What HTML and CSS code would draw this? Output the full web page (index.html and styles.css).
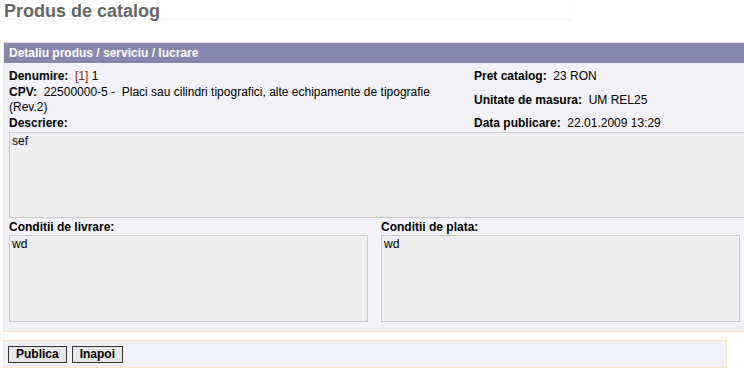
FILE: index.html
```html
<!DOCTYPE html>
<html lang="ro">
<head>
    <meta charset="UTF-8">
    <meta name="viewport" content="width=device-width, initial-scale=1.0">
    <title>Produs de catalog</title>
    <link rel="stylesheet" href="styles.css">
</head>
<body>
    <div class="page-title">
        <h1>Produs de catalog</h1>
    </div>

    <div class="panel">
        <div class="panel-head">Detaliu produs / serviciu / lucrare</div>
        <div class="panel-body">
            <div class="details">
                <div class="cell"><b>Denumire:</b>&nbsp; <span class="ref">[1]</span> 1</div>
                <div class="cell"><b>Pret catalog:</b>&nbsp; 23 RON</div>
                <div class="cell cpv"><b>CPV:</b>&nbsp; 22500000-5 -&nbsp; Placi sau cilindri tipografici, alte echipamente de tipografie<br>(Rev.2)</div>
                <div class="cell"><b>Unitate de masura:</b>&nbsp; UM REL25</div>
                <div class="cell"><b>Descriere:</b></div>
                <div class="cell"><b>Data publicare:</b>&nbsp; 22.01.2009 13:29</div>
            </div>
            <textarea class="box box-desc" readonly>sef</textarea>
            <div class="conditions">
                <div class="cond">
                    <label>Conditii de livrare:</label>
                    <textarea class="box box-cond" readonly>wd</textarea>
                </div>
                <div class="cond">
                    <label>Conditii de plata:</label>
                    <textarea class="box box-cond" readonly>wd</textarea>
                </div>
            </div>
        </div>
    </div>

    <div class="actions">
        <button class="btn">Publica</button>
        <button class="btn">Inapoi</button>
    </div>
</body>
</html>
```

FILE: styles.css
```css
body { margin: 0; padding: 0 0 0 3px; font-family: "Liberation Sans", Arial, sans-serif; font-size: 12px; color: #000; background: #fff; overflow: hidden; }

.page-title { width: 568px; height: 19px; border-bottom: 1px solid #f2f2f2; border-right: 1px solid #f6f6f6; }
.page-title h1 { margin: 0; padding: 3px 0 0 1px; font-size: 18px; line-height: 17px; color: #666; font-weight: bold; }

.panel { width: 770px; margin-top: 22px; border-top: 1px solid #eadbd3; border-left: 1px solid #fbe6c6; border-bottom: 1px solid #fbe6c6; background: #f1f1f6; }
.panel-head { height: 20px; line-height: 20px; padding-left: 5px; background: #8787ae; color: #fff; font-weight: bold; }
.panel-body { padding: 6px 0 9px 5px; }

.details { display: grid; grid-template-columns: 465px 1fr; row-gap: 1px; align-items: center; line-height: 15px; }
.cpv { padding-right: 30px; }
.ref { color: #8b1a1a; }

.box { display: block; box-sizing: border-box; margin: 0; padding: 1px 2px; resize: none; font-family: "Liberation Sans", Arial, sans-serif; font-size: 12px; line-height: 14px; color: #000; background: #eeeeee; border: 1px solid #c6c6c6; overflow: hidden; }
.box-desc { width: 760px; height: 86px; margin-top: 1px; }

.conditions { display: grid; grid-template-columns: 359px 359px; column-gap: 13px; margin-top: 2px; }
.cond label { display: block; font-weight: bold; line-height: 14px; margin-bottom: 1px; }
.box-cond { width: 359px; height: 87px; }

.actions { width: 724px; height: 28px; margin-top: 8px; display: flex; align-items: center; gap: 5px; padding-left: 4px; box-sizing: border-box; background: #f1f1f8; border: 1px solid #fce5c0; }
.btn { height: 17px; padding: 0 7px; font-family: "Liberation Sans", Arial, sans-serif; font-size: 12px; font-weight: bold; color: #000; background: #e6e6e6; border: 1px solid #333; border-radius: 0; }
```
